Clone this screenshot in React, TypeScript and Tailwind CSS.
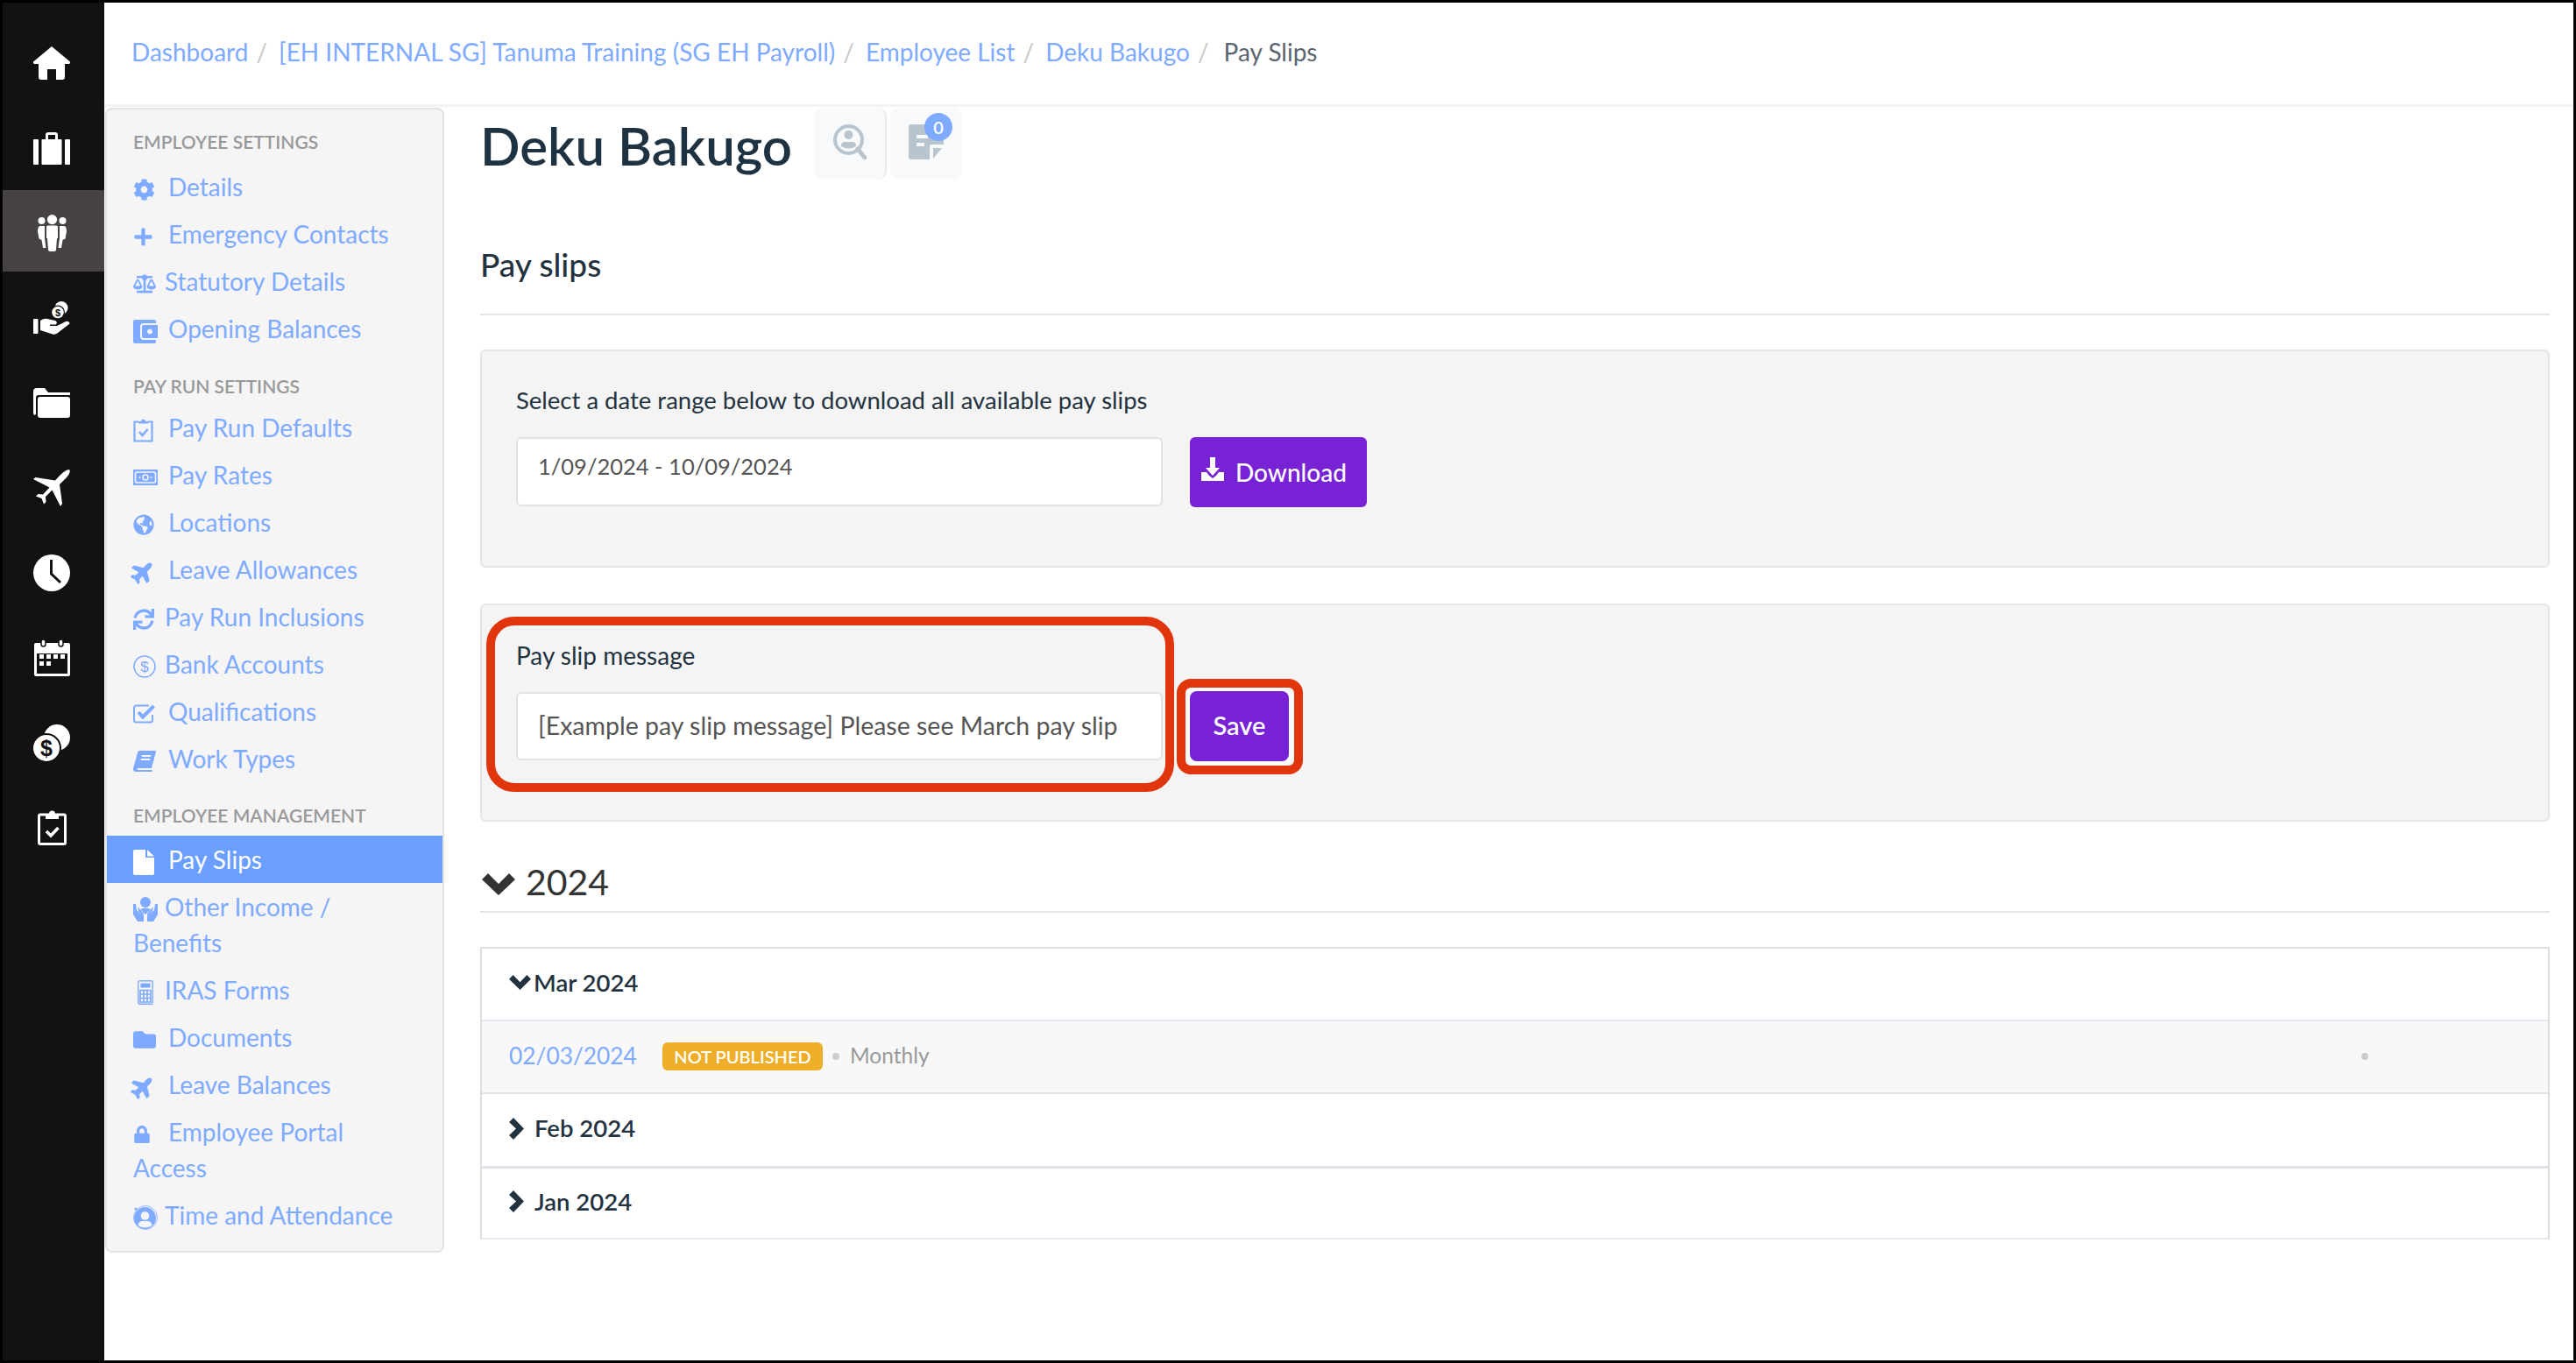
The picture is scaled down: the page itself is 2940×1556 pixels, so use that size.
import React from "react";
import { FaCog, FaPlus, FaBalanceScale, FaGlobeAmericas, FaPlane, FaSync, FaFolder, FaLock } from "react-icons/fa";

const Home = () => (
  <svg width="42" height="38" viewBox="0 0 42 38" fill="#fff"><path d="M21 0 L42 17.5 V19 L41 20 H36 V35 a3 3 0 0 1 -3 3 H26 V26 H16 V38 H9 a3 3 0 0 1 -3 -3 V20 H1 L0 19 V17.5 Z" /></svg>
);
const Suitcase = () => (
  <svg width="42" height="37" viewBox="0 0 42 37" fill="#fff"><rect x="0" y="8" width="6" height="29" rx="1" /><rect x="36" y="8" width="6" height="29" rx="1" /><rect x="9.5" y="8" width="23" height="29" rx="1" /><path d="M14 8 V3 a3 3 0 0 1 3-3 h8 a3 3 0 0 1 3 3 V8 H25 V3 H17 V8 Z" /></svg>
);
const People = () => (
  <svg width="33" height="42" viewBox="0 0 33 42" fill="#fff"><circle cx="4.5" cy="7" r="4" /><circle cx="28.5" cy="7" r="4" /><circle cx="16.5" cy="5.6" r="7" fill="#474344" /><circle cx="16.5" cy="5.6" r="5.6" /><path d="M10 14 Q10 12.5 12 12.5 H21 Q23 12.5 23 14 V27 H22 L21 40 Q21 42 19 42 H14 Q12 42 12 40 L11 27 H10 Z" /><path d="M2.5 13 H8 V27 L9.5 38 H6 L4.5 29 L1.5 27.5 L0 19 Q0 14 2.5 13 Z" /><path d="M30.5 13 H25 V27 L23.5 38 H27 L28.5 29 L31.5 27.5 L33 19 Q33 14 30.5 13 Z" /></svg>
);
const HandCoin = () => (
  <svg width="42" height="38" viewBox="0 0 42 38" fill="#fff"><rect x="0" y="20" width="5.5" height="17" rx="1" /><path d="M8 22 Q13 18.5 18 20.5 L25 22 Q28 23.5 26 26.5 L19 26.5 L19 28 L27 28 L37 23 Q41 22 41.5 25.5 L28 36 Q25 38.5 22 37.5 L8 33 Z" /><circle cx="32" cy="7.5" r="7.5" /><circle cx="28" cy="12.5" r="8" fill="#141112" /><circle cx="28" cy="12.5" r="6.8" /><text x="28" y="17" textAnchor="middle" fontSize="11" fontWeight="700" fill="#141112" fontFamily="Liberation Sans, sans-serif">$</text></svg>
);
const Files = () => (
  <svg width="42" height="34" viewBox="0 0 42 34" fill="#fff"><path d="M0 4 Q0 0 4 0 H13 L17 5 H42 V8 H6 Q3 8 3 11 V30 L1 31 Q0 30 0 28 Z" /><rect x="5" y="10" width="37" height="24" rx="3" /></svg>
);
const Plane = () => (
  <svg width="42" height="42" viewBox="0 0 42 42" fill="#fff"><path d="M41.5 .5 C42.5 2 41 6 36 11 L30 17 L33 39 L31 42 L21.5 23.5 L14 31 L14.5 37 L12 39.5 L9.5 33 L3 30.5 L5.5 28 L11 28.5 L18.5 20.5 L0 11 L2.5 9 L25 12.5 L31 6 C36 1 40 -.5 41.5 .5 Z" /></svg>
);
const Clock = () => (
  <svg width="42" height="42" viewBox="0 0 42 42"><circle cx="21" cy="21" r="21" fill="#fff" /><path d="M20.5 6 V22 L31 32" fill="none" stroke="#141112" strokeWidth="3" /></svg>
);
const Calendar = () => (
  <svg width="41" height="42" viewBox="0 0 41 42" fill="#fff">
    <path fillRule="evenodd" d="M2 4 H39 a2 2 0 0 1 2 2 V40 a2 2 0 0 1 -2 2 H2 a2 2 0 0 1 -2 -2 V6 a2 2 0 0 1 2 -2 Z M3 16 V39 H38 V16 Z" />
    <rect x="8" y="0" width="5" height="8" rx="2.5" stroke="#141112" strokeWidth="1.5" /><rect x="28" y="0" width="5" height="8" rx="2.5" stroke="#141112" strokeWidth="1.5" />
    <rect x="6" y="17" width="5" height="5" /><rect x="14" y="17" width="5" height="5" /><rect x="22" y="17" width="5" height="5" /><rect x="30" y="17" width="5" height="5" />
    <rect x="6" y="25" width="5" height="5" /><rect x="14" y="25" width="5" height="5" />
  </svg>
);
const Coins = () => (
  <svg width="42" height="42" viewBox="0 0 42 42"><circle cx="27" cy="15" r="15" fill="#fff" /><circle cx="15" cy="27" r="17" fill="#141112" /><circle cx="15" cy="27" r="15" fill="#fff" /><text x="15" y="36" textAnchor="middle" fontSize="25" fontWeight="700" fill="#141112" fontFamily="Liberation Sans, sans-serif">$</text></svg>
);
const ClipCheck = () => (
  <svg width="33" height="40" viewBox="0 0 33 40" fill="none"><rect x="1.5" y="5" width="30" height="33.5" rx="1.5" stroke="#fff" strokeWidth="3" /><path d="M9 4 H13 a3.5 3.5 0 0 1 7 0 H24 V10 H9 Z" fill="#fff" /><path d="M10 24 L15 29 L23.5 20" stroke="#fff" strokeWidth="3.5" /></svg>
);

const blue = "#7eaaff";
const Wallet = () => (
  <svg width="28" height="27" viewBox="0 0 28 27" fill={blue}><path fillRule="evenodd" d="M2 0 H24 a2 2 0 0 1 2 2 V4 H12 a4 4 0 0 0 -4 4 V19 a4 4 0 0 0 4 4 H26 V25 a2 2 0 0 1 -2 2 H2 a2 2 0 0 1 -2 -2 V2 a2 2 0 0 1 2 -2 Z" /><path fillRule="evenodd" d="M12 6 H28 V21 H12 a2 2 0 0 1 -2 -2 V8 a2 2 0 0 1 2 -2 Z M19 10.5 a3 3 0 1 0 .01 0 Z" /></svg>
);
const ClipBlue = () => (
  <svg width="23" height="27" viewBox="0 0 23 27" fill="none"><path d="M6 3.5 H1.5 V25.5 H21.5 V3.5 H17" stroke={blue} strokeWidth="2.2" /><path d="M6 5.5 V3 H9 a2.5 2.5 0 0 1 5 0 H17 V5.5 Z" fill={blue} /><path d="M7 15 L10.5 19 L16.5 12" stroke={blue} strokeWidth="2.6" /></svg>
);
const Money = () => (
  <svg width="28" height="18" viewBox="0 0 28 18"><rect width="28" height="18" fill={blue} /><rect x="2.5" y="3" width="23" height="12" rx="2" fill="none" stroke="#f5f5f5" strokeWidth="1.6" /><circle cx="14" cy="9" r="3" fill="none" stroke="#f5f5f5" strokeWidth="1.6" /><circle cx="7.5" cy="9" r="1" fill="#f5f5f5" /><circle cx="20.5" cy="9" r="1" fill="#f5f5f5" /></svg>
);
const Dollar = () => (
  <svg width="26" height="26" viewBox="0 0 26 26" fill="none"><circle cx="13" cy="13" r="12" stroke={blue} strokeWidth="1.6" /><text x="13" y="19" textAnchor="middle" fontSize="17" fill={blue} fontFamily="Liberation Sans, sans-serif">$</text></svg>
);
const CheckBox = () => (
  <svg width="26" height="22" viewBox="0 0 26 22" fill="none"><path d="M22 12 V18 a2.5 2.5 0 0 1 -2.5 2.5 H3.5 A2.5 2.5 0 0 1 1 18 V4 A2.5 2.5 0 0 1 3.5 1.5 H18" stroke={blue} strokeWidth="2" /><path d="M6 9 L11 14.5 L23.5 2" stroke={blue} strokeWidth="4" /></svg>
);
const Book = () => (
  <svg width="26" height="24" viewBox="0 0 26 24" fill={blue}><path fillRule="evenodd" d="M7 0 H25 a1 1 0 0 1 1 1 L21 20 H5 a1.8 1.8 0 0 0 0 2 H21 a1 1 0 0 1 0 2 H3 Q0 24 0 21 Q0 19 1 17 L5 2 Q5.5 0 7 0 Z M10 5 L9.5 7 H20 L20.5 5 Z M9 9 L8.5 11 H19 L19.5 9 Z" /></svg>
);
const FileIcon = () => (
  <svg width="24" height="29" viewBox="0 0 24 29"><path d="M2 0 H14 V9 H24 V27 a2 2 0 0 1 -2 2 H2 a2 2 0 0 1 -2 -2 V2 a2 2 0 0 1 2 -2 Z" fill="#fff" /><path d="M16 0 L24 7.5 H16 Z" fill="#fff" /></svg>
);
const HandsPerson = () => (
  <svg width="28" height="28" viewBox="0 0 28 28" fill={blue}><circle cx="14" cy="6" r="6" /><path d="M0 8 L3 8 L4 15 L12 22 V28 H5 L0 20 Z" /><path d="M28 8 L25 8 L24 15 L16 22 V28 H23 L28 20 Z" /><path d="M5 11 L12 19 V22 L6.5 17 Z" /><path d="M23 11 L16 19 V22 L21.5 17 Z" /><path d="M8 14 Q14 11 20 14 L14 20 Z" /></svg>
);
const Calc = () => (
  <svg width="18" height="28" viewBox="0 0 18 28" fill="none"><rect x=".8" y=".8" width="16.4" height="26.4" rx="1.5" stroke={blue} strokeWidth="1.4" /><rect x="3.5" y="3.5" width="11" height="5" fill={blue} />
    <path d="M3 11.5 H15 V25 H3 Z M3 16 H15 M3 20.5 H15 M7 11.5 V25 M11 11.5 V25" stroke={blue} strokeWidth="1.6" /></svg>
);
const PersonRing = () => (
  <svg width="28" height="28" viewBox="0 0 28 28"><circle cx="13.5" cy="14.5" r="12.5" fill={blue} /><circle cx="14" cy="14" r="13.5" fill="none" stroke={blue} strokeWidth=".8" /><circle cx="13.5" cy="12" r="4.8" fill="#f5f5f5" /><path d="M5.5 23 Q6 18.5 10 18 H17 Q21 18.5 21.5 23 Q13.5 28 5.5 23 Z" fill="#f5f5f5" /><circle cx="3" cy="4" r="1.6" fill={blue} /></svg>
);
const Down = () => (
  <svg width="26" height="27" viewBox="0 0 26 27" fill="#fff" className="-mt-[6px]"><path d="M10 0 H16 V12 H21 L13 21 L5 12 H10 Z" /><path d="M0 17 H6 L9 21 L13 24 L17 21 L20 17 H26 V27 H0 Z" /></svg>
);
const UserSearch = () => (
  <svg width="38" height="40" viewBox="0 0 38 40" fill="none"><circle cx="17.5" cy="17.5" r="15.5" stroke="#b8c4ce" strokeWidth="4" /><path d="M28 28 L36 38" stroke="#b8c4ce" strokeWidth="5" strokeLinecap="round" /><circle cx="17.5" cy="12" r="5" fill="#b8c4ce" /><path d="M9 25 Q9 20 13 20 H22 Q26 20 26 25 Q17.5 30 9 25 Z" fill="#b8c4ce" /></svg>
);
const Note = () => (
  <svg width="40" height="40" viewBox="0 0 40 40" fill="#b8c4ce"><path fillRule="evenodd" d="M3 0 H37 a3 3 0 0 1 3 3 V23 H26 a2 2 0 0 0 -2 2 V40 H3 a3 3 0 0 1 -3 -3 V3 a3 3 0 0 1 3 -3 Z M9 12 V16 H22 V12 Z M9 21 V25 H18 V21 Z" /><path d="M28 27 H38 L28 39 Z" /></svg>
);
const ChevD = ({ w, h, cls }: { w: number; h: number; cls: string }) => (
  <svg width={w} height={h} viewBox="0 0 38 25" fill="currentColor" className={cls} preserveAspectRatio="none"><path d="M0 7 L7 0 L19 12 L31 0 L38 7 L19 25 Z" /></svg>
);
const ChevR = ({ cls }: { cls: string }) => (
  <svg width="17" height="25" viewBox="0 0 17 25" fill="currentColor" className={cls}><path d="M5 0 L17 12.5 L5 25 L0 20 L8 12.5 L0 5 Z" /></svg>
);

type Item = { label: string; icon: React.ReactNode; w: string; active?: boolean };
const I = ({ children, cls }: { children: React.ReactNode; cls: string }) => <span className={`inline-flex items-center h-[24px] align-middle ${cls}`}>{children}</span>;
const planeSmall = <FaPlane size={28} className="-rotate-45 -ml-[3px]" />;
const settings: Item[] = [
  { label: "Details", icon: <FaCog size={25} />, w: "w-[40px]" },
  { label: "Emergency Contacts", icon: <FaPlus size={23} />, w: "w-[40px]" },
  { label: "Statutory Details", icon: <FaBalanceScale size={26} />, w: "w-[36px]" },
  { label: "Opening Balances", icon: <Wallet />, w: "w-[40px]" },
];
const payrun: Item[] = [
  { label: "Pay Run Defaults", icon: <ClipBlue />, w: "w-[40px]" },
  { label: "Pay Rates", icon: <Money />, w: "w-[40px]" },
  { label: "Locations", icon: <FaGlobeAmericas size={24} />, w: "w-[40px]" },
  { label: "Leave Allowances", icon: planeSmall, w: "w-[40px]" },
  { label: "Pay Run Inclusions", icon: <FaSync size={24} />, w: "w-[36px]" },
  { label: "Bank Accounts", icon: <Dollar />, w: "w-[36px]" },
  { label: "Qualifications", icon: <CheckBox />, w: "w-[40px]" },
  { label: "Work Types", icon: <Book />, w: "w-[40px]" },
];
const mgmt: Item[] = [
  { label: "Pay Slips", icon: <FileIcon />, w: "w-[40px]", active: true },
  { label: "Other Income / Benefits", icon: <HandsPerson />, w: "w-[36px]" },
  { label: "IRAS Forms", icon: <Calc />, w: "w-[36px] pl-[5px]" },
  { label: "Documents", icon: <FaFolder size={26} />, w: "w-[40px]" },
  { label: "Leave Balances", icon: planeSmall, w: "w-[40px]" },
  { label: "Employee Portal Access", icon: <FaLock size={20} />, w: "w-[40px]" },
  { label: "Time and Attendance", icon: <PersonRing />, w: "w-[36px]" },
];
const NavList = ({ items }: { items: Item[] }) => (
  <ul>
    {items.map((it) => (
      <li key={it.label} className={`py-[6.5px] pl-[30px] pr-[30px] leading-[41px] text-[28px] ${it.active ? "bg-[#6b9fff] text-white" : "text-[#7eaaff]"}`}>
        <I cls={it.w}>{it.icon}</I>
        {it.label}
      </li>
    ))}
  </ul>
);
const H = ({ children, cls }: { children: React.ReactNode; cls: string }) => <div className={`pl-[30px] text-[21px] leading-[28px] font-semibold uppercase text-[#999999] ${cls}`}>{children}</div>;

const crumbs = ["Dashboard", "[EH INTERNAL SG] Tanuma Training (SG EH Payroll)", "Employee List", "Deku Bakugo"];
const rail = [<Home />, <Suitcase />, <People />, <HandCoin />, <Files />, <Plane />, <Clock />, <Calendar />, <Coins />, <ClipCheck />];

export default function App() {
  return (
    <div className="w-[2940px] h-[1556px] border-[3px] border-black bg-white flex overflow-hidden font-['Lato','Liberation_Sans',sans-serif] text-[#23323f]">
      <aside className="w-[116px] shrink-0 bg-[#141112] pt-[20px]">
        {rail.map((icon, i) => (
          <div key={i} className={`h-[93px] mb-[4px] pt-[5px] pr-[4px] flex items-center justify-center ${i === 2 ? "bg-[#474344]" : ""}`}>{icon}</div>
        ))}
      </aside>
      <div className="flex-1 flex flex-col min-w-0">
        <nav className="h-[119px] shrink-0 border-b-[3px] border-[#f3f3f3] pl-[31px] flex items-center pb-[4px] text-[28px] text-[#7eaaff]">
          {crumbs.map((c) => (
            <React.Fragment key={c}>
              <span>{c}</span>
              <span className="text-[#c8c8c8] ml-[9px] mr-[13px]">/</span>
            </React.Fragment>
          ))}
          <span className="ml-[4px] text-[#5a6570]">Pay Slips</span>
        </nav>
        <div className="flex-1 flex items-start">
          <aside className="ml-[1px] mt-[1px] w-[387px] h-[1307px] shrink-0 bg-[#f5f5f5] rounded-[8px] border-2 border-[#e3e3e3] pt-[23px]">
            <H cls="">Employee Settings</H>
            <div className="mt-[10px]"><NavList items={settings} /></div>
            <H cls="mt-[25px]">Pay Run Settings</H>
            <div className="mt-[6px]"><NavList items={payrun} /></div>
            <H cls="mt-[24px]">Employee Management</H>
            <div className="mt-[9px]"><NavList items={mgmt} /></div>
          </aside>
          <main className="flex-1 min-w-0 pl-[41px] pr-[27px]">
            <div className="mt-[1px] flex items-start h-[82px]">
              <h1 className="text-[60px] leading-[82px] font-semibold text-[#1f3241] pt-[2px]">Deku Bakugo</h1>
              <div className="ml-[25px] flex relative">
                <div className="w-[83px] h-[82px] rounded-[10px] bg-[#f8f9fa] flex items-center justify-center pb-[4px] border-r-2 border-[#e6e9ec]"><UserSearch /></div>
                <div className="ml-[4px] w-[82px] h-[82px] rounded-[10px] bg-[#f8f9fa] flex items-center justify-center pb-[4px] relative">
                  <Note />
                  <span className="absolute left-[39px] top-[6px] w-[32px] h-[32px] rounded-full bg-[#7eaaff] text-white text-[20px] leading-[32px] text-center font-semibold">0</span>
                </div>
              </div>
            </div>
            <h2 className="pt-[77px] pb-[36px] leading-[40px] text-[37px] font-medium border-b-2 border-[#e5e5e5]">Pay slips</h2>
            <section className="mt-[39px] h-[249px] rounded-[6px] border-2 border-[#e5e5e5] bg-[#f4f4f4] pl-[39px] pt-[40px]">
              <div className="text-[27.5px] leading-[32px]">Select a date range below to download all available pay slips</div>
              <div className="mt-[26px] flex">
                <div className="w-[738px] h-[79px] rounded-[6px] border-2 border-[#dde3e6] bg-white pl-[23px] pb-[12px] flex items-center text-[25.5px] text-[#555555]">1/09/2024 - 10/09/2024</div>
                <button className="ml-[31px] w-[202px] h-[80px] rounded-[6px] bg-[#7822d6] text-white text-[28px] font-medium flex items-center justify-start pl-[13px] pb-[1px] gap-[13px]"><Down />Download</button>
              </div>
            </section>
            <section className="relative mt-[41px] h-[249px] rounded-[6px] border-2 border-[#e5e5e5] bg-[#f4f4f4] pl-[39px] pt-[41px] flex items-start">
              <div>
                <div className="text-[28px] leading-[32px]">Pay slip message</div>
                <div className="mt-[26px] w-[738px] h-[78px] rounded-[6px] border-2 border-[#dde3e6] bg-white pl-[23px] pb-[2px] flex items-center text-[28.5px] text-[#555555]">[Example pay slip message] Please see March pay slip</div>
              </div>
              <button className="ml-[31px] mt-[57px] w-[113px] h-[80px] rounded-[8px] bg-[#7822d6] ring-[5px] ring-white text-white text-[29px] font-semibold pb-[2px]">Save</button>
              <div className="absolute left-[5px] top-[13px] w-[785px] h-[200px] border-[10px] border-[#e0350d] rounded-[32px]" />
              <div className="absolute left-[793px] top-[84px] w-[144px] h-[109px] border-[10px] border-[#e0350d] rounded-[16px]" />
            </section>
            <div className="mt-[45px] pb-[9px] leading-[50px] h-[59px] border-b-2 border-[#e5e5e5] flex items-center text-[41px] text-[#333333]"><ChevD w={38} h={25} cls="ml-[2px] mr-[12px] mt-[4px]" />2024</div>
            <div className="mt-[39px] border-x-2 border-t-2 border-b-2 border-x-[#dcdfe0] border-t-[#dcdfe0] border-b-[#e4e9f2] text-[27.5px] font-semibold">
              <div className="h-[81px] pl-[31px] pb-[4px] flex items-center"><ChevD w={25} h={17} cls="mr-[3px]" />Mar 2024</div>
              <div className="h-[85px] border-y-2 border-t-[#e4e9f2] border-b-[#dfe2e8] bg-[#f8f8f8] pl-[31px] pb-[2px] flex items-center font-normal relative">
                <span className="w-[146px] text-[#7eaaff] text-[26.3px]">02/03/2024</span>
                <span className="ml-[29px] w-[183px] h-[32px] rounded-[6px] bg-[#efae28] text-white text-[20px] leading-[32px] text-center font-semibold">NOT PUBLISHED</span>
                <span className="ml-[11px] w-[8px] h-[8px] rounded-full bg-[#cccccc]" />
                <span className="ml-[12px] text-[#999999] text-[24.5px]">Monthly</span>
                <span className="absolute right-[205px] top-[36px] w-[8px] h-[8px] rounded-full bg-[#cccccc]" />
              </div>
              <div className="h-[82px] pl-[31px] pb-[4px] flex items-center"><ChevR cls="mr-[12px]" />Feb 2024</div>
              <div className="h-[82px] border-t-[3px] border-[#dfe2e8] pl-[31px] pb-[4px] flex items-center"><ChevR cls="mr-[12px]" />Jan 2024</div>
            </div>
          </main>
        </div>
      </div>
    </div>
  );
}
